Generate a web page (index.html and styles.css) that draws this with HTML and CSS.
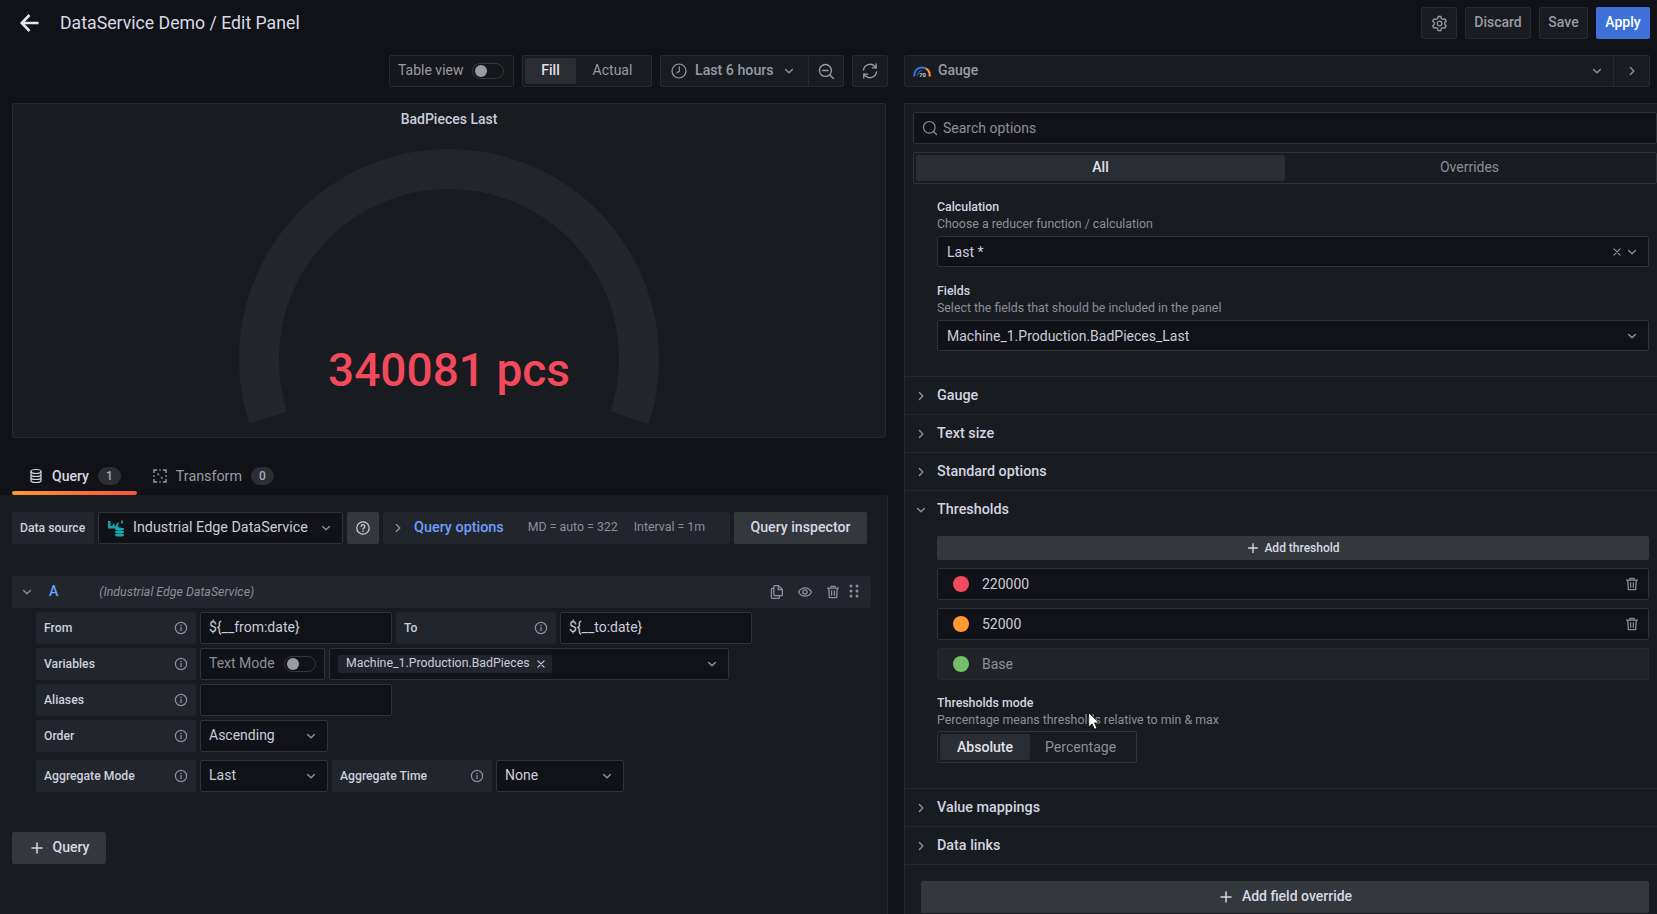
FILE: index.html
```html
<!DOCTYPE html>
<html lang="en">
<head>
<meta charset="utf-8">
<title>DataService Demo / Edit Panel</title>
<link rel="stylesheet" href="styles.css">
</head>
<body>
<svg class="sprite" aria-hidden="true">
  <symbol id="i-down" viewBox="0 0 16 16"><path d="M4.6 6.4 8 9.8l3.4-3.4" fill="none" stroke="currentColor" stroke-width="1.4" stroke-linecap="round" stroke-linejoin="round"/></symbol>
  <symbol id="i-right" viewBox="0 0 16 16"><path d="M6.4 4.4 9.8 8l-3.4 3.6" fill="none" stroke="currentColor" stroke-width="1.4" stroke-linecap="round" stroke-linejoin="round"/></symbol>
  <symbol id="i-info" viewBox="0 0 16 16"><circle cx="8" cy="8" r="5.6" fill="none" stroke="currentColor" stroke-width="1.2"/><path d="M8 7.4v3.2" stroke="currentColor" stroke-width="1.3" stroke-linecap="round"/><circle cx="8" cy="5.3" r=".8" fill="currentColor"/></symbol>
  <symbol id="i-help" viewBox="0 0 16 16"><circle cx="8" cy="8" r="6.2" fill="none" stroke="currentColor" stroke-width="1.3"/><path d="M6.2 6.4a1.8 1.8 0 1 1 2.9 1.4c-.7.5-1.1.8-1.1 1.5" fill="none" stroke="currentColor" stroke-width="1.3" stroke-linecap="round"/><circle cx="8" cy="11.2" r=".8" fill="currentColor"/></symbol>
  <symbol id="i-trash" viewBox="0 0 16 16"><path d="M2.5 4.2h11M6 4V2.4h4V4M3.8 4.2l.5 9.4h7.4l.5-9.4M6.6 6.8v4.4M9.4 6.8v4.4" fill="none" stroke="currentColor" stroke-width="1.3" stroke-linejoin="round" stroke-linecap="round"/></symbol>
  <symbol id="i-eye" viewBox="0 0 16 16"><path d="M1.5 8C3 5.2 5.3 3.8 8 3.8s5 1.4 6.500 4.200C13 10.800 10.700 12.200 8 12.200S3 10.800 1.500 8Z" fill="none" stroke="currentColor" stroke-width="1.3" stroke-linejoin="round"/><circle cx="8" cy="8" r="2.100" fill="none" stroke="currentColor" stroke-width="1.300"/></symbol>
  <symbol id="i-copy" viewBox="0 0 16 16"><path d="M5.500 4.300H3.400a1 1 0 0 0-1 1v8a1 1 0 0 0 1 1h6a1 1 0 0 0 1-1v-1.500M5.800 1.600h3.700l3.900 3.900v5.200a1 1 0 0 1-1 1H5.800a1 1 0 0 1-1-1V2.600a1 1 0 0 1 1-1ZM9.300 1.800v3.900h3.900" fill="none" stroke="currentColor" stroke-width="1.300" stroke-linejoin="round"/></symbol>
  <symbol id="i-plus" viewBox="0 0 16 16"><path d="M8 3v10M3 8h10" stroke="currentColor" stroke-width="1.500" stroke-linecap="round"/></symbol>
  <symbol id="i-x" viewBox="0 0 16 16"><path d="m4.500 4.500 7 7m0-7-7 7" stroke="currentColor" stroke-width="1.400" stroke-linecap="round"/></symbol>
</svg>

<header class="topbar">
  <svg class="back" viewBox="0 0 20 20" width="20" height="20"><path d="M18.500 10H2.500M9.500 2 1.800 10l7.700 8" fill="none" stroke="currentColor" stroke-width="2.600" stroke-linejoin="miter"/></svg>
  <h1 class="title">DataService Demo / Edit Panel</h1>
  <div class="top-actions">
    <button class="tool icon-tool">
      <svg viewBox="0 0 16 16" width="17" height="17"><path d="M6.700 1.400h2.600l.4 1.900 1.500.9 1.900-.6 1.300 2.200-1.500 1.300v1.800l1.500 1.300-1.300 2.200-1.900-.6-1.500.9-.4 1.900H6.700l-.4-1.900-1.500-.9-1.900.6-1.300-2.200 1.500-1.300V7.100L1.600 5.800l1.300-2.200 1.900.6 1.500-.9Z" fill="none" stroke="currentColor" stroke-width="1.200" stroke-linejoin="round"/><circle cx="8" cy="8" r="2.200" fill="none" stroke="currentColor" stroke-width="1.200"/></svg>
    </button>
    <button class="tool strong discard">Discard</button>
    <button class="tool strong save">Save</button>
    <button class="apply">Apply</button>
  </div>
</header>

<div class="workspace">
  <main class="left">
    <div class="toolbar">
      <div class="tool-box table-view"><span>Table view</span><span class="switch"></span></div>
      <div class="tool-box fill-group"><span class="seg seg-on">Fill</span><span class="seg">Actual</span></div>
      <div class="tool-box time-group">
        <span class="time-range">
          <svg viewBox="0 0 16 16" width="16" height="16"><circle cx="8" cy="8" r="7" fill="none" stroke="currentColor" stroke-width="1.200"/><path d="M8.300 3.800v4.500L6 9.800" fill="none" stroke="currentColor" stroke-width="1.200" stroke-linecap="round"/></svg>
          <b>Last 6 hours</b>
          <svg class="ic" width="16" height="16"><use href="#i-down"/></svg>
        </span>
        <span class="time-zoom">
          <svg viewBox="0 0 16 16" width="17" height="17"><circle cx="7" cy="7" r="5.600" fill="none" stroke="currentColor" stroke-width="1.300"/><path d="M4.500 7h5M11 11l3.500 3.500" stroke="currentColor" stroke-width="1.300" stroke-linecap="round"/></svg>
        </span>
      </div>
      <button class="tool refresh">
        <svg viewBox="0 0 16 16" width="18" height="18"><path d="M2.200 7.200A5.900 5.900 0 0 1 12.400 4l1 1.100M13.800 8.800A5.900 5.900 0 0 1 3.600 12l-1-1.100" fill="none" stroke="currentColor" stroke-width="1.200" stroke-linecap="round"/><path d="M13.500 1.700v3.500H10M2.500 14.300v-3.500H6" fill="none" stroke="currentColor" stroke-width="1.200" stroke-linecap="round" stroke-linejoin="round"/></svg>
      </button>
    </div>

    <section class="panel">
      <div class="panel-title">BadPieces Last</div>
      <svg class="gauge" viewBox="0 0 872 302" width="872" height="302">
        <path d="M255.300 283.700A190 190 0 1 1 616.700 283.700" fill="none" stroke="#22252b" stroke-width="40"/>
        <text x="436" y="252" text-anchor="middle" class="gauge-value">340081 pcs</text>
      </svg>
    </section>

    <nav class="tabs">
      <div class="tab tab-on">
        <svg viewBox="0 0 16 16" width="16" height="16"><ellipse cx="8" cy="3.500" rx="5" ry="2" fill="none" stroke="currentColor" stroke-width="1.200"/><path d="M3 3.500v9c0 1.100 2.200 2 5 2s5-.9 5-2v-9M3 6.500c0 1.100 2.200 2 5 2s5-.9 5-2M3 9.500c0 1.100 2.200 2 5 2s5-.9 5-2" fill="none" stroke="currentColor" stroke-width="1.200"/></svg>
        <span>Query</span><span class="count">1</span>
      </div>
      <div class="tab">
        <svg viewBox="0 0 16 16" width="16" height="16"><path d="M5 2H2v3M11 2h3v3M5 14H2v-3M11 14h3v-3" fill="none" stroke="currentColor" stroke-width="1.400"/><path d="M7 2h2M7 14h2M2 7v2M14 7v2" stroke="currentColor" stroke-width="1.200"/><path d="m5.500 5.500 1.500 1.500M10.500 10.500 9 9" stroke="currentColor" stroke-width="1.200"/></svg>
        <span>Transform</span><span class="count">0</span>
      </div>
    </nav>

    <section class="query-pane">
      <div class="ds-row">
        <span class="field-label ds-label">Data source</span>
        <div class="input ds-select">
          <svg class="ds-logo" viewBox="0 0 18 18" width="18" height="18">
            <path d="M1 2h2.500v5H1zM5 7l2-3 1 3.500L11 3l1 1-1.500 3.500H12v2H1V7z" fill="#17a2a6"/>
            <path d="M14 1.500h2v3h-2z" fill="#3f7f82"/>
            <ellipse cx="12.500" cy="10" rx="4.500" ry="1.500" fill="#19a9ad"/>
            <ellipse cx="12.500" cy="13" rx="4.500" ry="1.500" fill="#19a9ad"/>
            <ellipse cx="12.500" cy="16" rx="4.500" ry="1.500" fill="#19a9ad"/>
          </svg>
          <span class="ds-name">Industrial Edge DataService</span>
          <svg class="ic" width="16" height="16"><use href="#i-down"/></svg>
        </div>
        <button class="btn btn-help"><svg width="16" height="16"><use href="#i-help"/></svg></button>
        <div class="query-options">
          <svg class="ic" width="16" height="16"><use href="#i-right"/></svg>
          <b>Query options</b>
          <span class="qo-md">MD = auto = 322</span>
          <span class="qo-int">Interval = 1m</span>
        </div>
        <button class="btn btn-inspector">Query inspector</button>
      </div>

      <div class="query-head">
        <svg class="ic" width="16" height="16"><use href="#i-down"/></svg>
        <b class="ref">A</b>
        <i class="ds-hint">(Industrial Edge DataService)</i>
        <div class="query-icons">
          <svg width="16" height="16"><use href="#i-copy"/></svg>
          <svg width="16" height="16"><use href="#i-eye"/></svg>
          <svg width="16" height="16"><use href="#i-trash"/></svg>
          <svg class="drag" viewBox="0 0 10 14" width="10" height="14"><g fill="currentColor"><circle cx="2" cy="2" r="1.500"/><circle cx="8" cy="2" r="1.500"/><circle cx="2" cy="7" r="1.500"/><circle cx="8" cy="7" r="1.500"/><circle cx="2" cy="12" r="1.500"/><circle cx="8" cy="12" r="1.500"/></g></svg>
        </div>
      </div>

      <div class="fields">
        <div class="field-row">
          <span class="field-label wide">From<svg width="16" height="16"><use href="#i-info"/></svg></span>
          <div class="input w192">${__from:date}</div>
          <span class="field-label wide">To<svg width="16" height="16"><use href="#i-info"/></svg></span>
          <div class="input w192">${__to:date}</div>
        </div>
        <div class="field-row">
          <span class="field-label wide">Variables<svg width="16" height="16"><use href="#i-info"/></svg></span>
          <div class="input text-mode"><span>Text Mode</span><span class="switch"></span></div>
          <div class="input multi">
            <span class="chip">Machine_1.Production.BadPieces<svg width="14" height="14"><use href="#i-x"/></svg></span>
            <svg class="ic" width="16" height="16"><use href="#i-down"/></svg>
          </div>
        </div>
        <div class="field-row">
          <span class="field-label wide">Aliases<svg width="16" height="16"><use href="#i-info"/></svg></span>
          <div class="input w192"></div>
        </div>
        <div class="field-row">
          <span class="field-label wide">Order<svg width="16" height="16"><use href="#i-info"/></svg></span>
          <div class="input select w128"><span>Ascending</span><svg class="ic" width="16" height="16"><use href="#i-down"/></svg></div>
        </div>
        <div class="field-row agg-row">
          <span class="field-label wide">Aggregate Mode<svg width="16" height="16"><use href="#i-info"/></svg></span>
          <div class="input select w128"><span>Last</span><svg class="ic" width="16" height="16"><use href="#i-down"/></svg></div>
          <span class="field-label wide">Aggregate Time<svg width="16" height="16"><use href="#i-info"/></svg></span>
          <div class="input select w128"><span>None</span><svg class="ic" width="16" height="16"><use href="#i-down"/></svg></div>
        </div>
      </div>

      <button class="btn btn-add"><svg width="16" height="16"><use href="#i-plus"/></svg>Query</button>
    </section>
  </main>

  <aside class="right">
    <div class="viz-picker">
      <div class="viz-name">
        <svg viewBox="0 0 18 14" width="18" height="14">
          <path d="M1.500 12.500A7.500 7.500 0 0 1 9 3.500a7.500 7.500 0 0 1 4 1.200" fill="none" stroke="#3274d9" stroke-width="2"/>
          <path d="M13 4.700A7.500 7.500 0 0 1 16.500 12.500" fill="none" stroke="#ff9830" stroke-width="2"/>
          <path d="M4.600 11.500A4.600 4.600 0 0 1 9 6.600" fill="none" stroke="#3274d9" stroke-width="1"/>
          <text x="9.500" y="12.500" text-anchor="middle" class="viz-num">70</text>
        </svg>
        <b>Gauge</b>
        <svg class="ic end" width="16" height="16"><use href="#i-down"/></svg>
      </div>
      <div class="viz-toggle"><svg class="ic" width="16" height="16"><use href="#i-right"/></svg></div>
    </div>

    <div class="options">
      <div class="opt-head">
        <div class="input search">
          <svg viewBox="0 0 16 16" width="16" height="16"><circle cx="7.300" cy="7.300" r="5.800" fill="none" stroke="currentColor" stroke-width="1.200"/><path d="m11.500 11.500 3 3" stroke="currentColor" stroke-width="1.200" stroke-linecap="round"/></svg>
          <span>Search options</span>
        </div>
        <div class="opt-tabs"><span class="opt-tab opt-tab-on">All</span><span class="opt-tab">Overrides</span></div>
      </div>

      <div class="opt-body first-body">
        <div class="opt-label">Calculation</div>
        <div class="opt-desc">Choose a reducer function / calculation</div>
        <div class="input opt-select"><span>Last *</span><span class="sel-icons"><svg width="14" height="14"><use href="#i-x"/></svg><svg class="ic" width="16" height="16"><use href="#i-down"/></svg></span></div>
        <div class="opt-label fields-label">Fields</div>
        <div class="opt-desc">Select the fields that should be included in the panel</div>
        <div class="input opt-select"><span>Machine_1.Production.BadPieces_Last</span><svg class="ic" width="16" height="16"><use href="#i-down"/></svg></div>
      </div>

      <div class="opt-row"><svg class="ic" width="16" height="16"><use href="#i-right"/></svg><span>Gauge</span></div>
      <div class="opt-row"><svg class="ic" width="16" height="16"><use href="#i-right"/></svg><span>Text size</span></div>
      <div class="opt-row"><svg class="ic" width="16" height="16"><use href="#i-right"/></svg><span>Standard options</span></div>
      <div class="opt-row"><svg class="ic" width="16" height="16"><use href="#i-down"/></svg><span>Thresholds</span></div>

      <div class="opt-body thresholds">
        <button class="btn btn-threshold"><svg width="14" height="14"><use href="#i-plus"/></svg>Add threshold</button>
        <div class="input th-row"><span class="dot dot-red"></span><span class="th-val">220000</span><svg class="ic" width="16" height="16"><use href="#i-trash"/></svg></div>
        <div class="input th-row"><span class="dot dot-orange"></span><span class="th-val">52000</span><svg class="ic" width="16" height="16"><use href="#i-trash"/></svg></div>
        <div class="input th-row th-base"><span class="dot dot-green"></span><span class="th-val">Base</span></div>
        <div class="opt-label mode-label">Thresholds mode</div>
        <div class="opt-desc">Percentage means thresholds relative to min &amp; max</div>
        <div class="radio"><span class="radio-item radio-on">Absolute</span><span class="radio-item">Percentage</span></div>
      </div>

      <div class="opt-row"><svg class="ic" width="16" height="16"><use href="#i-right"/></svg><span>Value mappings</span></div>
      <div class="opt-row"><svg class="ic" width="16" height="16"><use href="#i-right"/></svg><span>Data links</span></div>
      <div class="override-wrap"><button class="btn btn-override"><svg width="16" height="16"><use href="#i-plus"/></svg>Add field override</button></div>
    </div>
  </aside>
</div>

<svg class="cursor" viewBox="0 0 11 18" width="11" height="18"><path d="M.7.7v14.400l3.400-3.200 2.400 5.400 2.500-1.100-2.400-5.300h4.600Z" fill="#fff" stroke="#000" stroke-width=".8"/></svg>
</body>
</html>
```

FILE: styles.css
```css
* { box-sizing: border-box; }
html, body { margin: 0; height: 914px; overflow: hidden; }
body {
  position: relative;
  background: #111217;
  color: #ccccdc;
  font: 400 14px/1.4 Roboto, "Liberation Sans", sans-serif;
  display: flex;
  flex-direction: column;
}
.sprite { position: absolute; width: 0; height: 0; }
button { font: inherit; color: inherit; border: 0; padding: 0; cursor: pointer; }
svg { flex: none; display: block; }
b { font-weight: 500; }
.ic { color: #8e8e99; }

/* top bar */
.topbar { height: 47px; flex: none; display: flex; align-items: flex-start; padding: 7px 7px 0 20px; }
.back { color: #e4e5ee; margin-top: 6px; }
.title { margin: 1px 0 0 20px; font-size: 17.7px; font-weight: 400; line-height: 30px; color: #d8d9e6; }
.top-actions { margin-left: auto; display: flex; gap: 8px; }
.tool {
  height: 32px;
  display: flex;
  align-items: center;
  justify-content: center;
  background: #181b1f;
  border: 1px solid #26292e;
  border-radius: 2px;
  color: #9a9aa5;
}
.icon-tool { width: 36px; }
.strong { font-weight: 500; }
.discard { width: 66px; }
.save { width: 49px; }
.apply { width: 54px; height: 32px; background: #3d71d9; color: #fff; font-weight: 500; border-radius: 2px; }

/* layout */
.workspace { flex: 1; min-height: 0; display: flex; }
.left { width: 888px; flex: none; display: flex; flex-direction: column; }
.right { width: 753px; flex: none; margin-left: 16px; display: flex; flex-direction: column; }

/* toolbar */
.toolbar { margin-top: 8px; height: 32px; display: flex; justify-content: flex-end; gap: 8px; }
.tool-box { height: 32px; display: flex; align-items: center; border: 1px solid #26292e; border-radius: 2px; background: #15171b; color: #9a9aa5; }
.table-view { width: 125px; padding-left: 8px; gap: 8px; }
.switch { width: 32px; height: 16px; border: 1px solid #33363c; border-radius: 8px; position: relative; flex: none; }
.switch::before { content: ""; position: absolute; left: 2px; top: 1px; width: 12px; height: 12px; border-radius: 50%; background: #9b9ba6; }
.fill-group { width: 130px; padding: 2px; background: #181b1f; }
.seg { height: 26px; display: flex; align-items: center; justify-content: center; flex: 1; }
.seg:first-child { flex: none; width: 51px; }
.seg-on { background: #2a2d33; color: #e1e2ea; font-weight: 500; border-radius: 2px; }
.time-group { width: 184px; background: #181b1f; }
.time-range { width: 148px; height: 100%; display: flex; align-items: center; padding-left: 10px; border-right: 1px solid #26292e; }
.time-range b { margin-left: 8px; margin-right: 7px; font-size: 14.2px; }
.time-zoom { flex: 1; display: flex; justify-content: center; }
.refresh { width: 36px; }

/* panel */
.panel { margin: 16px 0 0 12px; width: 874px; height: 335px; background: #181b1f; border: 1px solid #25282d; border-radius: 2px; }
.panel-title { height: 30px; line-height: 31px; text-align: center; font-weight: 500; color: #ccccdc; }
.gauge { display: block; }
.gauge-value { font: 500 46px Roboto, sans-serif; fill: #f2495c; }

/* tabs */
.tabs { margin: 23px 0 0 12px; height: 34px; display: flex; }
.tab { height: 34px; padding: 4px 15px 0; display: flex; align-items: flex-start; gap: 8px; color: #9a9aa5; line-height: 22px; font-size: 14.3px; }
.tab > svg { margin-top: 3px; }
.tab-on { padding-left: 16px; padding-right: 16px; font-size: 14px; color: #d8d9e6; font-weight: 500; position: relative; }
.tab-on::after { content: ""; position: absolute; left: 0; right: 0; bottom: 0; height: 4px; border-radius: 2px; background: linear-gradient(90deg, #ff9830, #f2553c); }
.count { min-width: 23px; height: 18px; margin-left: 1px; margin-top: 2px; border-radius: 9px; background: #2c2e34; font-size: 12px; line-height: 18px; text-align: center; color: #aaaab4; font-weight: 500; }

/* query pane */
.query-pane { flex: 1; padding: 17px 0 0 12px; background: #181b1f; border-right: 1px solid #25282d; }
.ds-row { display: flex; gap: 4px; height: 32px; }
.field-label { display: flex; align-items: center; height: 32px; padding: 2px 8px 0; background: #22252b; border-radius: 2px; font-size: 12.2px; font-weight: 500; color: #cfd0dd; }
.ds-label { width: 82px; }
.input { height: 32px; background: #111217; border: 1px solid #2f3238; border-radius: 2px; padding: 0 8px; display: flex; align-items: center; color: #ccccdc; }
.ds-select { width: 245px; padding-left: 8px; }
.ds-logo { margin-right: 8px; }
.ds-name { flex: 1; font-size: 14.35px; }
.btn { display: flex; align-items: center; justify-content: center; background: #34373c; border-radius: 2px; color: #d8d9e6; font-weight: 500; }
.btn-help { width: 32px; height: 32px; color: #ccccdc; }
.query-options { width: 347px; height: 32px; display: flex; align-items: center; padding-left: 7px; background: #22252b; border-radius: 2px; font-size: 12.35px; color: #8e8e99; }
.query-options b { margin-left: 8px; font-size: 14.4px; color: #6e9fff; }
.qo-md { margin-left: 24px; }
.qo-int { margin-left: 16px; }
.btn-inspector { width: 133px; height: 32px; font-size: 14.15px; }

.query-head { margin-top: 32px; width: 859px; height: 32px; display: flex; align-items: center; padding-left: 7px; background: #22252b; border-radius: 2px; }
.ref { margin-left: 14px; color: #6e9fff; }
.ds-hint { margin-left: 41px; font-size: 12.4px; color: #8e8e99; }
.query-icons { margin-left: auto; display: flex; align-items: center; gap: 12px; padding-right: 12px; color: #8e8e99; }
.drag { margin-left: -4px; margin-top: -2px; }
.fields { margin: 4px 0 0 24px; display: flex; flex-direction: column; gap: 4px; }
.field-row { display: flex; gap: 4px; }
.wide { width: 160px; justify-content: space-between; }
.wide svg { color: #8e8e99; width: 16px; margin-right: -1px; margin-top: -2px; }
.w192 { width: 192px; }
.w128 { width: 128px; }
.select { justify-content: space-between; }
.text-mode { width: 125px; justify-content: space-between; color: #8e8e99; padding-right: 8px; }
.multi { width: 400px; justify-content: space-between; }
.chip { height: 18px; display: flex; align-items: center; gap: 4px; padding: 0 4px 0 8px; background: #22252b; border-radius: 2px; font-size: 12.3px; }
.agg-row { margin-top: 4px; }
.btn-add { margin-top: 40px; width: 94px; height: 32px; gap: 8px; }

/* right column */
.viz-picker { margin-top: 8px; width: 746px; height: 32px; display: flex; background: #181b1f; border: 1px solid #26292e; border-radius: 2px; }
.viz-name { flex: 1; display: flex; align-items: center; padding: 0 8px; gap: 7px; color: #9a9aa5; border-right: 1px solid #26292e; }
.viz-num { font: 700 6px Roboto, sans-serif; fill: #ccccdc; }
.end { margin-left: auto; }
.viz-toggle { width: 35px; display: flex; align-items: center; justify-content: center; }

.options { margin-top: 16px; flex: 1; min-height: 0; background: #181b1f; border-left: 1px solid #25282d; border-top: 1px solid #25282d; }
.opt-head { padding: 8px 0 0 8px; display: flex; flex-direction: column; gap: 8px; }
.search { gap: 5px; color: #8e8e99; padding-left: 8px; padding-right: 0; }
.search span { padding-top: 1px; }
.opt-tabs { height: 32px; display: flex; padding: 2px; border: 1px solid #2f3238; border-radius: 2px; }
.opt-tab { flex: 1; display: flex; align-items: center; justify-content: center; color: #8e8e99; }
.opt-tab-on { background: #2a2d33; color: #e1e2ea; font-weight: 500; border-radius: 2px; }

.opt-body { padding: 0 8px 0 32px; }
.first-body { padding-top: 14px; padding-bottom: 25px; }
.opt-label { font-size: 12.35px; font-weight: 500; padding-top: 2px; line-height: 15px; color: #d3d4e0; }
.opt-desc { font-size: 12.35px; line-height: 18px; color: #8e8e99; }
.opt-select { margin-top: 3px; height: 31px; justify-content: space-between; padding-left: 9px; }
.opt-select > span:first-child { padding-top: 2px; }
.sel-icons { display: flex; align-items: center; gap: 0; color: #8e8e99; }
.fields-label { margin-top: 15px; }
.opt-row { height: 38px; display: flex; align-items: center; gap: 8px; padding-left: 8px; border-top: 1px solid #25282d; font-weight: 500; font-size: 14.35px; color: #d3d4e0; }
.opt-row span { padding-top: 2px; }
.thresholds { margin-top: 8px; padding-bottom: 25px; }
.btn-threshold { width: 100%; height: 24px; gap: 4px; font-size: 12px; }
.th-row { margin-top: 8px; height: 32px; padding-left: 15px; gap: 14px; }
.th-val { flex: 1; padding-top: 1px; margin-left: -1px; }
.th-base { background: #202328; border-color: #25282d; }
.th-base .th-val { color: #8e8e99; }
.dot { width: 16px; height: 16px; border-radius: 50%; }
.dot-red { background: #f2495c; }
.dot-orange { background: #ff9830; }
.dot-green { background: #73bf69; }
.mode-label { margin-top: 15px; padding-top: 0; line-height: 16px; }
.radio { margin-top: 2px; width: 200px; height: 32px; display: flex; padding: 2px; border: 1px solid #2f3238; border-radius: 2px; }
.radio-item { display: flex; align-items: center; justify-content: center; color: #8e8e99; padding: 2px 15px 0; font-size: 14.1px; }
.radio-on { width: 90px; background: #2a2d33; color: #e1e2ea; font-weight: 500; border-radius: 2px; }
.override-wrap { border-top: 1px solid #25282d; padding: 16px 8px 0 16px; }
.btn-override { width: 100%; height: 32px; gap: 8px; }

/* mouse pointer over the page */
.cursor { position: absolute; left: 1088px; top: 712px; }
```
